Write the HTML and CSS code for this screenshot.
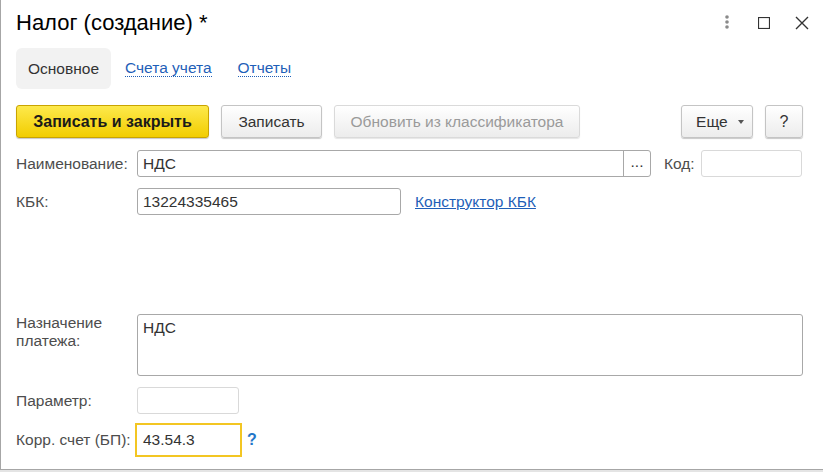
FILE: index.html
```html
<!DOCTYPE html>
<html lang="ru">
<head>
<meta charset="utf-8">
<link rel="stylesheet" href="styles.css">
</head>
<body>
<div class="window">
  <div class="titlebar">
    <h1 class="title">Налог (создание) *</h1>
    <div class="wctl">
      <svg class="ic-kebab" width="6" height="16" viewBox="0 0 6 16"><circle cx="3" cy="3" r="1.8" fill="#8a8a8a"/><circle cx="3" cy="8" r="1.8" fill="#8a8a8a"/><circle cx="3" cy="13" r="1.8" fill="#8a8a8a"/></svg>
      <svg class="ic-max" width="12" height="12" viewBox="0 0 12 12"><rect x="0.5" y="0.5" width="11" height="11" fill="none" stroke="#333" stroke-width="1.2"/></svg>
      <svg class="ic-close" width="14" height="14" viewBox="0 0 14 14"><path d="M1 1L13 13M13 1L1 13" stroke="#333" stroke-width="1.4"/></svg>
    </div>
  </div>
  <div class="tabs">
    <span class="tab active">Основное</span>
    <a class="tab link">Счета учета</a>
    <a class="tab link">Отчеты</a>
  </div>
  <div class="toolbar">
    <button class="btn primary">Записать и закрыть</button>
    <button class="btn save">Записать</button>
    <button class="btn disabled">Обновить из классификатора</button>
    <span class="spacer"></span>
    <button class="btn more">Еще <span class="caret"></span></button>
    <button class="btn help">?</button>
  </div>
  <div class="form">
    <div class="row r-name">
      <label class="lbl">Наименование:</label>
      <div class="field f-name"><span class="val">НДС</span><span class="dots">...</span></div>
      <label class="lbl lbl-code">Код:</label>
      <div class="field f-code light"></div>
    </div>
    <div class="row r-kbk">
      <label class="lbl">КБК:</label>
      <div class="field f-kbk"><span class="val">13224335465</span></div>
      <a class="kbk-link">Конструктор КБК</a>
    </div>
    <div class="row r-purpose">
      <label class="lbl two">Назначение<br>платежа:</label>
      <div class="field f-purpose"><span class="val">НДС</span></div>
    </div>
    <div class="row r-param">
      <label class="lbl">Параметр:</label>
      <div class="field f-param light"></div>
    </div>
    <div class="row r-corr">
      <label class="lbl">Корр. счет (БП):</label>
      <div class="field f-corr"><span class="val">43.54.3</span></div>
      <span class="q">?</span>
    </div>
  </div>
</div>
</body>
</html>
```
FILE: styles.css
```css
* { box-sizing: border-box; }
html, body { margin: 0; padding: 0; }
body {
  width: 823px; height: 472px; overflow: hidden;
  background: #e4e4e4;
  font-family: "Liberation Sans", Arial, sans-serif;
  font-size: 15.5px;
  color: #4d4d4d;
}
.window {
  width: 823px; height: 470px;
  background: #fff;
  border-left: 1px solid #a6a6a6;
  border-bottom: 1px solid #a6a6a6;
  display: flex; flex-direction: column;
}
.titlebar {
  display: flex; align-items: flex-start;
  padding: 10px 0 0 15px;
  height: 48px;
}
.title {
  margin: 0; font-weight: normal; font-size: 22px; line-height: 26px;
  color: #000; flex: 1;
}
.wctl { display: flex; align-items: center; height: 26px; }
.ic-kebab { margin-right: 28px; margin-top: -2px; }
.ic-max { margin-right: 25px; }
.ic-close { margin-right: 14px; }
.tabs { display: flex; align-items: center; padding-left: 15px; height: 41px; }
.tab {
  height: 41px; display: flex; align-items: center;
  padding: 0 12px; border-radius: 6px;
}
.tab.active { background: #f2f2f2; color: #333; width: 95px; }
.tab.link {
  color: #1f5fb8; padding: 0; height: auto; border-radius: 0;
  border-bottom: 1px dotted #1f5fb8; line-height: 16px; margin-left: 14px; margin-right: 12px;
}
.toolbar {
  display: flex; align-items: center; gap: 12px;
  padding: 16px 20px 0 15px;
}
.spacer { flex: 1; }
.btn {
  height: 33px; padding: 0;
  font-family: inherit; font-size: 15.5px; color: #333;
  background: linear-gradient(#ffffff, #ececec);
  border: 1px solid #c4c4c4; border-radius: 3px;
  box-shadow: 0 1px 1px rgba(0,0,0,0.22);
}
.btn.primary {
  width: 193px; font-weight: bold; color: #1a1a1a; font-size: 16px;
  background: linear-gradient(#fde94c, #f2cd00);
  border-color: #c9a400;
}
.btn.save { width: 101px; }
.btn.disabled { color: #9a9a9a; border-color: #dadada; box-shadow: 0 1px 1px rgba(0,0,0,0.1); width: 246px; }
.btn.more { width: 72px; padding: 0 0 0 6px; }
.caret {
  display: inline-block; width: 0; height: 0; margin-left: 6px; vertical-align: middle;
  border-left: 3.5px solid transparent; border-right: 3.5px solid transparent;
  border-top: 4px solid #555;
}
.btn.help { width: 38px; padding: 0; font-size: 16px; }
.form { padding: 12px 20px 0 15px; display: flex; flex-direction: column; }
.row { display: flex; align-items: center; }
.lbl { width: 121px; flex: none; }
.field {
  height: 27px; border: 1px solid #a8a8a8; border-radius: 3px;
  display: flex; align-items: center; color: #333; background: #fff;
}
.field.light { border-color: #d9d9d9; }
.val { padding-left: 5px; }
.f-name { width: 514px; justify-content: space-between; }
.dots {
  width: 27px; height: 100%; border-left: 1px solid #a8a8a8;
  display: flex; align-items: center; justify-content: center; padding-bottom: 4px; color: #333;
}
.lbl-code { width: auto; margin-left: 13px; margin-right: 6px; }
.f-code { width: 101px; }
.r-kbk { margin-top: 11px; }
.f-kbk { width: 264px; }
.kbk-link { color: #1f5fb8; text-decoration: underline; margin-left: 14px; }
.r-purpose { margin-top: 99px; align-items: flex-start; }
.lbl.two { line-height: 18px; padding-top: 0; }
.f-purpose { width: 666px; height: 62px; align-items: flex-start; padding-top: 4px; }
.r-param { margin-top: 11px; }
.f-param { width: 102px; }
.r-corr { margin-top: 9px; }
.lbl + .f-corr { margin-left: -2px; }
.f-corr {
  width: 107px; height: 34px; border: 2px solid #f3c623; border-radius: 0;
}
.f-corr .val { padding-left: 6px; }
.q { color: #2476c8; font-weight: bold; margin-left: 5px; font-size: 16px; }
```
